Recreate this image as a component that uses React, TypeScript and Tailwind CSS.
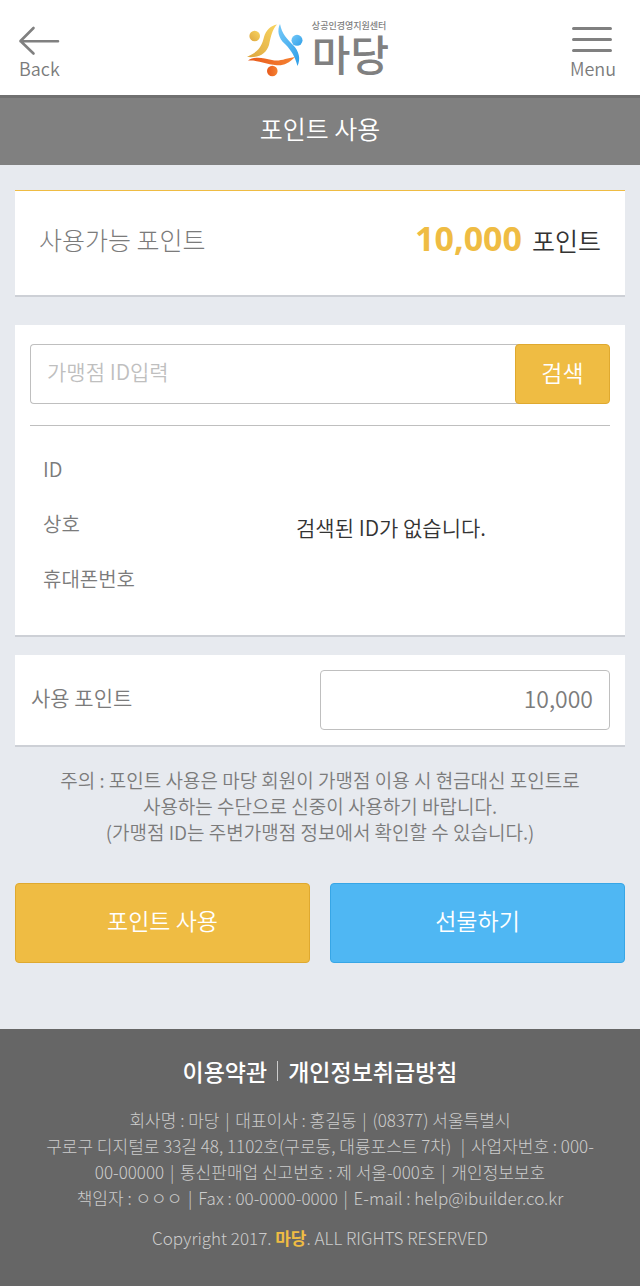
import { useState } from 'react';
import type { ReactNode } from 'react';

// --- Company details shown in the footer ---
const companyLines = [
  ['회사명 : 마당', '대표이사 : 홍길동', '(08377) 서울특별시'],
  ['구로구 디지털로 33길 48, 1102호(구로동, 대륭포스트 7차) ', '사업자번호 : 000-'],
  ['00-00000', '통신판매업 신고번호 : 제 서울-000호', '개인정보보호'],
  ['책임자 : ㅇㅇㅇ', 'Fax : 00-0000-0000', 'E-mail : help@ibuilder.co.kr'],
];

const resultLabels = ['ID', '상호', '휴대폰번호'];

const Logo = () => (
  <a href="#" aria-label="마당" className="flex items-start gap-[7px] text-[#808080]">
    <svg width="58" height="56" viewBox="0 0 58 56" fill="none" aria-hidden="true">
      <defs>
        <linearGradient id="gold" x1="1" y1="0" x2="0" y2="1">
          <stop offset="0" stopColor="#f9d55f" />
          <stop offset="1" stopColor="#dda640" />
        </linearGradient>
        <linearGradient id="blue" x1="0" y1="0" x2="1" y2="1">
          <stop offset="0" stopColor="#74c8f8" />
          <stop offset="1" stopColor="#2f9fe8" />
        </linearGradient>
        <linearGradient id="orange" x1="0" y1="0" x2="1" y2="0">
          <stop offset="0" stopColor="#e85a1c" />
          <stop offset="1" stopColor="#f58232" />
        </linearGradient>
      </defs>
      <circle cx="7.700" cy="15" r="5.300" fill="url(#gold)" />
      <circle cx="50" cy="19.300" r="5.500" fill="url(#blue)" />
      <circle cx="25.300" cy="50" r="5.300" fill="url(#orange)" />
      <path d="M30 3.500C24 4.500 19 9 17 16C15 24 13 30 0 36C12 37 19 33 22 24C24 15 25 9 30 3.500Z" fill="url(#gold)" />
      <path d="M33 3C30 9 31 17 38 23C45 30 48 36 50.500 45C54 38 52 30 46 24C40 18 35 13 33 3Z" fill="url(#blue)" />
      <path d="M1 39.500C8 35 16 37 25 39C33 41 39 37 48 36C41 43 36 45 28 44C19 43 12 39 1 39.500Z" fill="url(#orange)" />
    </svg>
    <span className="flex flex-col">
      <span className="text-[9px] leading-[10px] font-medium">상공인경영지원센터</span>
      <span className="mt-0.5 font-['Liberation_Sans','Noto_Sans_CJK_KR',sans-serif] text-[42px] leading-[47px] font-medium">마당</span>
    </span>
  </a>
);

const Card = ({ className = '', children }: { className?: string; children: ReactNode }) => (
  <section className={`border-b-2 border-[#cdd0d6] bg-white ${className}`}>{children}</section>
);

const App = () => {
  const [storeId, setStoreId] = useState('');
  const [points, setPoints] = useState('10,000');

  return (
    <div className="min-h-screen bg-[#e7eaef] font-['Noto_Sans_CJK_KR',sans-serif] font-[350] text-[#7b7b7b]">
      {/* Header */}
      <header className="flex h-[95px] items-start justify-between bg-white px-[18px] pt-[21px]">
        <button type="button" className="flex w-[54px] flex-col items-start pt-[5px] text-lg leading-6">
          <svg width="42" height="30" viewBox="0 0 42 30" fill="none" stroke="#808080" strokeWidth="2.6" strokeLinecap="round" strokeLinejoin="round" aria-hidden="true">
            <path d="M15.500 2L2.500 15L15.500 27.500M2.500 15.300H40" />
          </svg>
          <span className="pl-px">Back</span>
        </button>
        <Logo />
        <button type="button" className="flex w-[58px] flex-col items-center pt-[5px] text-lg leading-6">
          <svg width="42" height="30" viewBox="0 0 42 30" fill="none" stroke="#808080" strokeWidth="3" strokeLinecap="round" aria-hidden="true">
            <path d="M1.500 2.500H38.500M1.500 13.500H38.500M1.500 24.500H38.500" />
          </svg>
          <span>Menu</span>
        </button>
      </header>

      <h1 className="h-[70px] border-t-3 border-[#707070] bg-[#808080] text-center text-[25px] leading-[60px] text-white">
        포인트 사용
      </h1>

      <main className="px-[15px] pt-[25px] pb-[66px]">
        {/* Available points */}
        <Card>
          <div className="flex h-[105px] items-center justify-between border-t border-[#efbc43] px-6 pb-[6px] text-[25px]">
            <span className="font-light">사용가능 포인트</span>
            <span className="flex items-baseline gap-[10px] pb-1 text-[#333]">
              <strong className="font-['Open_Sans',sans-serif] text-[34px] font-bold text-[#efbc43]">10,000</strong>
              포인트
            </span>
          </div>
        </Card>

        {/* Store search */}
        <Card className="mt-7 px-[15px] pt-[19px] pb-7">
          <form className="flex h-[60px]" onSubmit={(e) => e.preventDefault()}>
            <input
              type="text"
              aria-label="가맹점 ID입력"
              placeholder="가맹점 ID입력"
              value={storeId}
              onChange={(e) => setStoreId(e.target.value)}
              className="-mr-1 min-w-0 flex-1 rounded-l border border-r-0 border-[#bfbfbf] px-4 pb-1 text-[21px] outline-none placeholder:text-[#bfbfbf]"
            />
            <button type="submit" className="relative w-[95px] rounded border border-[#dfa92f] bg-[#efbc43] pb-1 text-[23px] text-white">
              검색
            </button>
          </form>
          <table className="mt-[21px] w-full border-t border-[#bfbfbf]">
            <tbody>
              <tr className="h-4" />
              {resultLabels.map((label, index) => (
                <tr key={label} className="h-[55px]">
                  <th scope="row" className="w-[142px] pl-[13px] text-left text-xl font-[350]">{label}</th>
                  {index === 0 && (
                    <td rowSpan={3} className="pt-2 text-center text-[21px] text-[#333]">
                      검색된 ID가 없습니다.
                    </td>
                  )}
                </tr>
              ))}
            </tbody>
          </table>
        </Card>

        {/* Points to spend */}
        <Card className="mt-[18px] flex items-center justify-between p-[15px]">
          <label htmlFor="points" className="pb-1 pl-px text-[21px]">사용 포인트</label>
          <input
            id="points"
            type="text"
            value={points}
            onChange={(e) => setPoints(e.target.value)}
            className="h-[60px] w-1/2 rounded border border-[#bfbfbf] px-4 pb-1 text-right text-[23px] outline-none"
          />
        </Card>

        <p className="mt-5 text-center text-[19px] leading-[26px]">
          주의 : 포인트 사용은 마당 회원이 가맹점 이용 시 현금대신 포인트로
          <br />
          사용하는 수단으로 신중이 사용하기 바랍니다.
          <br />
          (가맹점 ID는 주변가맹점 정보에서 확인할 수 있습니다.)
        </p>

        <div className="mt-[38px] grid grid-cols-2 gap-5 text-[23px] text-white">
          <button type="button" className="h-20 rounded border border-[#dfa92f] bg-[#efbc43] pb-1">포인트 사용</button>
          <button type="button" className="h-20 rounded border border-[#37a6e6] bg-[#4fb7f3] pb-1">선물하기</button>
        </div>
      </main>

      <footer className="bg-[#666] pt-[26px] pb-[35px] text-center text-[17px] leading-[26px] font-light text-[#ccc]">
        <nav className="flex items-center justify-center gap-[10px] text-[23px] leading-8 font-medium text-white">
          <a href="#">이용약관</a>
          <span className="h-5 w-px bg-[#ccc]" />
          <a href="#">개인정보취급방침</a>
        </nav>
        <address className="mt-5 whitespace-pre not-italic">
          {companyLines.map((parts) => (
            <div key={parts[0]}>
              {parts.map((part, index) => (
                <span key={part}>
                  {index > 0 && <span className="px-0.5"> | </span>}
                  {part}
                </span>
              ))}
            </div>
          ))}
        </address>
        <p className="mt-[14px]">
          Copyright 2017. <b className="font-bold text-[#efbc43]">마당</b>. ALL RIGHTS RESERVED
        </p>
      </footer>
    </div>
  );
};

export default App;
